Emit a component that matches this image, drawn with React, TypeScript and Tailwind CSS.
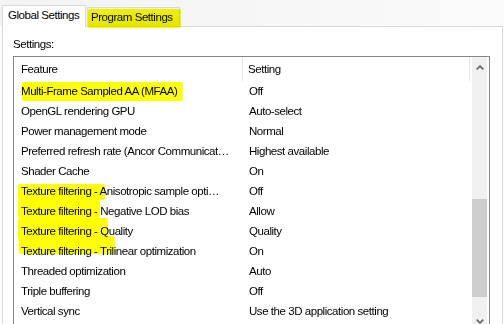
const rows: Array<[string, string]> = [
  ["Multi-Frame Sampled AA (MFAA)", "Off"],
  ["OpenGL rendering GPU", "Auto-select"],
  ["Power management mode", "Normal"],
  ["Preferred refresh rate (Ancor Communicat…", "Highest available"],
  ["Shader Cache", "On"],
  ["Texture filtering - Anisotropic sample opti…", "Off"],
  ["Texture filtering - Negative LOD bias", "Allow"],
  ["Texture filtering - Quality", "Quality"],
  ["Texture filtering - Trilinear optimization", "On"],
  ["Threaded optimization", "Auto"],
  ["Triple buffering", "Off"],
  ["Vertical sync", "Use the 3D application setting"],
];

// marker strokes drawn over the screenshot
const marks = [
  "left-[88px] top-[9px] w-[93px] h-[19px]",
  "left-[22px] top-[82px] w-[161px] h-[19px]",
  "left-[18px] top-[184px] w-[87px] h-[16px]",
  "left-[18px] top-[200px] w-[82px] h-[18px]",
  "left-[18px] top-[218px] w-[90px] h-[22px]",
  "left-[19px] top-[236px] w-[96px] h-[18px]",
];

function Chevron({ down }: { down?: boolean }) {
  return (
    <svg width="8" height="5" viewBox="0 0 8 5" className={down ? "rotate-180" : ""}>
      <polyline points="0.7,4.3 4,1.2 7.3,4.3" fill="none" stroke="#606060" strokeWidth="1.6" />
    </svg>
  );
}

export default function App() {
  return (
    <div
      className="relative w-[504px] h-[324px] overflow-hidden bg-white text-[11.5px] tracking-[-0.45px] text-black"
      style={{ fontFamily: '"Liberation Sans", Arial, sans-serif' }}
    >
      {/* tab strip */}
      <div className="flex items-end h-[26px] pl-[2px] bg-gradient-to-r from-[#f3f3f3] via-[#f6f6f6] to-[#fbfbfb]">
        <div className="relative z-10 -mb-px w-[84px] h-[22px] border border-b-0 border-[#d9d9d9] bg-white pl-[5px] pt-[2px] leading-[14px]">
          Global Settings
        </div>
        <div className="ml-px w-[93px] h-[19px] border border-b-0 border-[#d9d9d9] bg-gradient-to-b from-[#f0f0f0] to-[#e5e5e5] pl-[3px] pt-[2px] leading-[14px]">
          Program Settings
        </div>
      </div>

      {/* panel */}
      <div className="ml-[2px] w-[501px] h-[298px] border border-[#d9d9d9] border-b-0 bg-white pl-[10px] pr-[12px] pt-[10px]">
        <div className="leading-[14px] mb-[5px]">Settings:</div>
        <div className="flex h-[275px] border border-[#828790] bg-white">
          <div className="flex-1 min-w-0">
            <div className="flex h-[24px] leading-[24px]">
              <div className="w-[229px] pl-[7px] border-r border-[#e5e5e5]">Feature</div>
              <div className="w-[227px] pl-[5px] border-r border-[#e5e5e5]">Setting</div>
            </div>
            {rows.map(([f, s]) => (
              <div key={f} className="flex h-[20px] pt-px leading-[19px]">
                <div className="w-[229px] pl-[7px] whitespace-nowrap">{f}</div>
                <div className="w-[227px] pl-[6px] whitespace-nowrap">{s}</div>
              </div>
            ))}
          </div>
          {/* scrollbar */}
          <div className="flex flex-col w-[15px] mr-[2px] bg-[#f0f0f0]">
            <div className="h-[17px] flex items-center justify-center pt-[3px]">
              <Chevron />
            </div>
            <div className="h-[125px]" />
            <div className="h-[98px] bg-[#cdcdcd]" />
            <div className="flex-1" />
            <div className="h-[17px] flex items-center justify-center">
              <Chevron down />
            </div>
          </div>
        </div>
      </div>

      {marks.map((m) => (
        <div key={m} className={`absolute ${m} bg-[#ffff00] mix-blend-multiply rounded-[2px] pointer-events-none`} />
      ))}
    </div>
  );
}
